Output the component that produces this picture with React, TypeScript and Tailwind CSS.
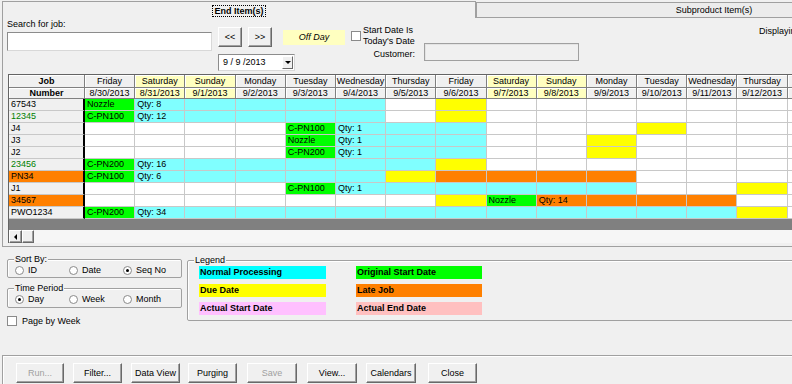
import React from "react";

const DAYS = [
  "Friday", "Saturday", "Sunday", "Monday", "Tuesday", "Wednesday", "Thursday",
  "Friday", "Saturday", "Sunday", "Monday", "Tuesday", "Wednesday", "Thursday", "Friday",
];
const DATES = [
  "8/30/2013", "8/31/2013", "9/1/2013", "9/2/2013", "9/3/2013", "9/4/2013", "9/5/2013",
  "9/6/2013", "9/7/2013", "9/8/2013", "9/9/2013", "9/10/2013", "9/11/2013", "9/12/2013", "9/13/2013",
];
const WEEKEND = [1, 2, 8, 9];

type Job = { id: string; tone?: "green" | "orange"; cells: string; text: Record<number, string> };

// w = empty, c = normal processing, g = original start, y = due date, o = late
const JOBS: Job[] = [
  { id: "67543", cells: "gcccccwywwwwwww", text: { 0: "Nozzle", 1: "Qty: 8" } },
  { id: "12345", tone: "green", cells: "gcccccwywwwwwww", text: { 0: "C-PN100", 1: "Qty: 12" } },
  { id: "J4", cells: "wwwwgcccwwwywww", text: { 4: "C-PN100", 5: "Qty: 1" } },
  { id: "J3", cells: "wwwwgcccwwywwww", text: { 4: "Nozzle", 5: "Qty: 1" } },
  { id: "J2", cells: "wwwwgcccwwywwww", text: { 4: "C-PN200", 5: "Qty: 1" } },
  { id: "23456", tone: "green", cells: "gccccccywwwwwww", text: { 0: "C-PN200", 1: "Qty: 16" } },
  { id: "PN34", tone: "orange", cells: "gcccccyoooowwww", text: { 0: "C-PN100", 1: "Qty: 6" } },
  { id: "J1", cells: "wwwwgccccccwwyw", text: { 4: "C-PN100", 5: "Qty: 1" } },
  { id: "34567", tone: "orange", cells: "wwwwwwwygooooww", text: { 8: "Nozzle", 9: "Qty: 14" } },
  { id: "PWO1234", cells: "gccccccccccccyw", text: { 0: "C-PN200", 1: "Qty: 34" } },
];

const CELL_BG: Record<string, string> = {
  w: "bg-white",
  c: "bg-[#80ffff]",
  g: "bg-[#00ff00]",
  y: "bg-[#ffff00]",
  o: "bg-[#ff8000]",
};

const raised =
  "bg-[#f0f0f0] border border-t-white border-l-white border-r-[#696969] border-b-[#696969] shadow-[inset_-1px_-1px_0_#a0a0a0]";

function Btn({ children, className = "", disabled = false }: { children: React.ReactNode; className?: string; disabled?: boolean }) {
  return (
    <div
      className={`flex shrink-0 items-center justify-center leading-none ${raised} ${disabled ? "text-[#a0a0a0]" : "text-black"} ${className}`}
    >
      {children}
    </div>
  );
}

function Radio({ label, checked = false }: { label: string; checked?: boolean }) {
  return (
    <div className="flex w-[54px] shrink-0 items-center">
      <div className="flex h-[9px] w-[9px] items-center justify-center rounded-full border border-[#8a8a8a] bg-white">
        {checked && <div className="h-[3px] w-[3px] rounded-full bg-black" />}
      </div>
      <span className="ml-[4px] leading-[11px]">{label}</span>
    </div>
  );
}

function Group({ title, className = "", children }: { title: string; className?: string; children: React.ReactNode }) {
  return (
    <div className={`shrink-0 rounded-[2px] border border-[#a0a0a0] shadow-[inset_1px_1px_0_#ffffff] ${className}`}>
      <div className="-mt-[6px] ml-[6px] h-[11px] w-fit bg-[#f0f0f0] px-[1px] leading-[11px]">{title}</div>
      {children}
    </div>
  );
}

function HeaderCell({ children, weekend = false, bold = false }: { children: React.ReactNode; weekend?: boolean; bold?: boolean }) {
  return (
    <div
      className={`flex items-center justify-center overflow-hidden whitespace-nowrap border-r border-b border-[#808080] leading-none shadow-[inset_1px_1px_0_#ffffff] ${weekend ? "bg-[#ffffc0]" : "bg-[#f0f0f0]"} ${bold ? "font-bold" : ""}`}
    >
      {children}
    </div>
  );
}

function Swatch({ label, color }: { label: string; color: string }) {
  return <div className={`h-[13px] pl-[1px] font-bold leading-[13px] whitespace-nowrap ${color}`}>{label}</div>;
}

export default function App() {
  return (
    <div className="h-[384px] w-[792px] overflow-hidden bg-[#f0f0f0] font-['Liberation_Sans',Arial,sans-serif] text-[9px] text-black">
      {/* tab strip */}
      <div className="flex h-[18px] items-start">
        <div className="ml-[2px] mt-[1px] flex h-[17px] w-[474px] shrink-0 justify-center border-t border-l border-r border-[#a0a0a0] pt-[3px]">
          <span className="h-[12px] border border-dotted border-black px-[1px] font-bold leading-[10px]">End Item(s)</span>
        </div>
        <div className="mt-[2px] flex h-[16px] w-[476px] shrink-0 items-center justify-center border border-[#a0a0a0] bg-[#ececec] leading-none">
          Subproduct Item(s)
        </div>
      </div>

      {/* tab panel */}
      <div className="ml-[2px] h-[229px] border-l border-b border-[#a0a0a0]">
        <div className="flex h-[56px] items-start">
          <div className="ml-[4px] w-[205px] shrink-0">
            <div className="h-[13px] leading-[13px]">Search for job:</div>
            <div className="mt-[1px] h-[19px] border border-[#8c8c8c] border-r-[#d8d8d8] border-b-[#d8d8d8] bg-white" />
          </div>
          <div className="ml-[6px] mt-[9px] shrink-0">
            <div className="flex items-start">
              <Btn className="h-[20px] w-[24px]">&lt;&lt;</Btn>
              <Btn className="ml-[6px] h-[20px] w-[24px]">&gt;&gt;</Btn>
              <div className="ml-[11px] mt-[3px] flex h-[15px] w-[62px] items-center justify-center bg-[#ffffc0] italic leading-none text-black">
                Off Day
              </div>
            </div>
            <div className="mt-[7px] flex h-[17px] w-[77px] items-center border border-[#8c8c8c] border-r-[#d8d8d8] border-b-[#d8d8d8] bg-white">
              <span className="ml-[4px] leading-none">9 / 9 /2013</span>
              <div className="ml-auto mr-[1px] flex h-[13px] w-[11px] items-center justify-center bg-[#f0f0f0] border border-t-white border-l-white border-r-[#696969] border-b-[#696969]">
                <div className="h-0 w-0 border-x-[3px] border-t-[3px] border-x-transparent border-t-black" />
              </div>
            </div>
          </div>
          <div className="ml-[6px] mt-[13px] h-[10px] w-[10px] shrink-0 border border-[#8a8a8a] bg-white" />
          <div className="ml-[2px] mt-[7px] w-[52px] shrink-0 whitespace-nowrap leading-[11px]">
            <div>Start Date Is</div>
            <div>Today&apos;s Date</div>
            <div className="mt-[2px] text-right">Customer:</div>
          </div>
          <div className="ml-[9px] mt-[25px] h-[18px] w-[155px] shrink-0 border border-[#a0a0a0] bg-[#f0f0f0] shadow-[inset_1px_1px_0_#e3e3e3]" />
          <div className="ml-[180px] mt-[8px] shrink-0 whitespace-nowrap leading-[11px]">Displaying</div>
        </div>

        {/* schedule grid */}
        <div className="ml-[5px] w-[900px] border-t border-l border-[#646464]">
          <div className="grid h-[13px] grid-cols-[76px_repeat(15,50.2px)]">
            <HeaderCell bold>Job</HeaderCell>
            {DAYS.map((d, i) => (
              <HeaderCell key={i} weekend={WEEKEND.includes(i)}>
                {d}
              </HeaderCell>
            ))}
          </div>
          <div className="grid h-[11px] grid-cols-[76px_repeat(15,50.2px)]">
            <HeaderCell bold>Number</HeaderCell>
            {DATES.map((d, i) => (
              <HeaderCell key={i} weekend={WEEKEND.includes(i)}>
                {d}
              </HeaderCell>
            ))}
          </div>
          {JOBS.map((job) => (
            <div key={job.id} className="grid h-[12px] grid-cols-[76px_repeat(15,50.2px)]">
              <div
                className={`overflow-hidden whitespace-nowrap border-r-2 border-r-black border-b border-b-[#c8c8c8] pl-[2px] leading-[11px] ${job.tone === "orange" ? "bg-[#ff8000]" : "bg-[#f0f0f0]"} ${job.tone === "green" ? "text-[#008000]" : "text-black"}`}
              >
                {job.id}
              </div>
              {job.cells.split("").map((c, i) => (
                <div
                  key={i}
                  className={`overflow-hidden whitespace-nowrap border-r border-b border-[#c8c8c8] pl-[2px] leading-[11px] ${CELL_BG[c]}`}
                >
                  {job.text[i] ?? ""}
                </div>
              ))}
            </div>
          ))}
          <div className="h-[11px] bg-[#808080]" />
          <div className="flex h-[13px] bg-[#f6f6f6]">
            <div className={`flex h-[13px] w-[13px] items-center justify-center ${raised}`}>
              <div className="h-0 w-0 border-y-[3px] border-r-[3px] border-y-transparent border-r-black" />
            </div>
            <div className={`h-[13px] w-[12px] ${raised}`} />
          </div>
        </div>
      </div>

      {/* options and legend */}
      <div className="flex h-[108px] items-start">
        <div className="ml-[7px] mt-[12px] w-[175px] shrink-0">
          <Group title="Sort By:" className="h-[19px]">
            <div className="ml-[7px] flex h-[11px] items-center">
              <Radio label="ID" />
              <Radio label="Date" />
              <Radio label="Seq No" checked />
            </div>
          </Group>
          <Group title="Time Period" className="mt-[10px] h-[20px]">
            <div className="ml-[7px] flex h-[11px] items-center">
              <Radio label="Day" checked />
              <Radio label="Week" />
              <Radio label="Month" />
            </div>
          </Group>
          <div className="mt-[8px] flex h-[10px] items-center">
            <div className="h-[10px] w-[10px] border border-[#8a8a8a] bg-white" />
            <span className="ml-[5px] leading-[11px]">Page by Week</span>
          </div>
        </div>
        <Group title="Legend" className="ml-[5px] mt-[13px] h-[61px] w-[640px]">
          <div className="ml-[11px] grid grid-cols-[127px_126px] gap-x-[30px] gap-y-[5px]">
            <Swatch label="Normal Processing" color="bg-[#00ffff]" />
            <Swatch label="Original Start Date" color="bg-[#00ff00]" />
            <Swatch label="Due Date" color="bg-[#ffff00]" />
            <Swatch label="Late Job" color="bg-[#ff8000]" />
            <Swatch label="Actual Start Date" color="bg-[#ffc0ff]" />
            <Swatch label="Actual End Date" color="bg-[#ffc0c0]" />
          </div>
        </Group>
      </div>

      {/* command buttons */}
      <div className="ml-[2px] flex h-[29px] items-start border-t border-l border-[#a0a0a0] pt-[7px] shadow-[inset_1px_1px_0_#ffffff]">
        <Btn disabled className="ml-[13px] h-[20px] w-[48px]">Run...</Btn>
        <Btn className="ml-[9px] h-[20px] w-[49px]">Filter...</Btn>
        <Btn className="ml-[9px] h-[20px] w-[49px]">Data View</Btn>
        <Btn className="ml-[8px] h-[20px] w-[49px]">Purging</Btn>
        <Btn disabled className="ml-[10px] h-[20px] w-[50px]">Save</Btn>
        <Btn className="ml-[10px] h-[20px] w-[50px]">View...</Btn>
        <Btn className="ml-[9px] h-[20px] w-[50px]">Calendars</Btn>
        <Btn className="ml-[12px] h-[20px] w-[49px]">Close</Btn>
      </div>
    </div>
  );
}
